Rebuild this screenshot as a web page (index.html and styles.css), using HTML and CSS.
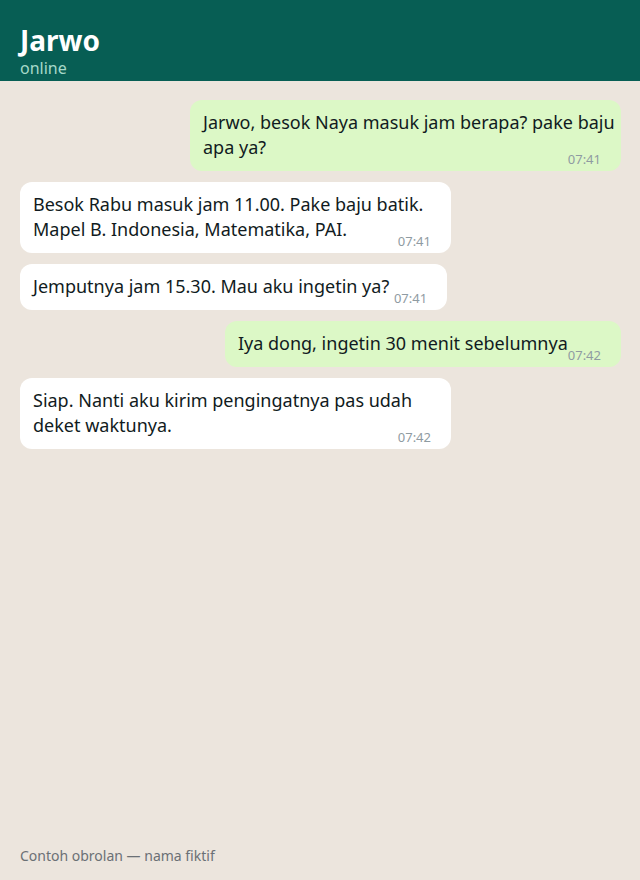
FILE: index.html
```html
<!DOCTYPE html>
<html>
<head>
    <title>Jarwo</title>
    <link rel="stylesheet" href="styles.css">
</head>
<body>
    <div class="chat-header">
        <div class="contact-name">Jarwo</div>
        <div class="contact-status">online</div>
    </div>
    <div class="chat-body">
        <div class="bubble outgoing">Jarwo, besok Naya masuk jam berapa? pake baju apa ya?<span class="time">07:41</span></div>
        <div class="bubble incoming">Besok Rabu masuk jam 11.00. Pake baju batik. Mapel B. Indonesia, Matematika, PAI.<span class="time">07:41</span></div>
        <div class="bubble incoming">Jemputnya jam 15.30. Mau aku ingetin ya?&nbsp;<span class="time">07:41</span></div>
        <div class="bubble outgoing">Iya dong, ingetin 30 menit sebelumnya<span class="time">07:42</span></div>
        <div class="bubble incoming">Siap. Nanti aku kirim pengingatnya pas udah deket waktunya.<span class="time">07:42</span></div>
    </div>
    <div class="chat-footer">Contoh obrolan — nama fiktif</div>
</body>
</html>
```

FILE: styles.css
```css
body {
    font-family: "Noto Sans", sans-serif;
    background-color: #ece5dd;
    margin: 0;
    height: 880px;
    display: flex;
    flex-direction: column;
}

.chat-header {
    background-color: #075e54;
    color: #ffffff;
    padding: 23px 20px 2px;
}

.contact-name {
    font-size: 28px;
    font-weight: bold;
    line-height: 34px;
}

.contact-status {
    font-size: 16px;
    line-height: 22px;
    color: #a6d9c9;
}

.chat-body {
    flex: 1;
    display: flex;
    flex-direction: column;
    gap: 11px;
    padding: 19px 19px 19px 20px;
}

.bubble {
    box-sizing: border-box;
    max-width: 431px;
    padding: 10px 6px 11px 13px;
    border-radius: 12px;
    font-size: 18px;
    line-height: 25px;
    color: #111b21;
}

.outgoing {
    align-self: flex-end;
    background-color: #dcf8c6;
}

.incoming {
    align-self: flex-start;
    background-color: #ffffff;
}

.time {
    float: right;
    font-size: 13px;
    line-height: 16px;
    color: #8f9ba2;
    margin: 16px 14px -7px 0;
}

.chat-footer {
    padding: 0 20px 15px;
    font-size: 14px;
    color: #6b7075;
}
```
